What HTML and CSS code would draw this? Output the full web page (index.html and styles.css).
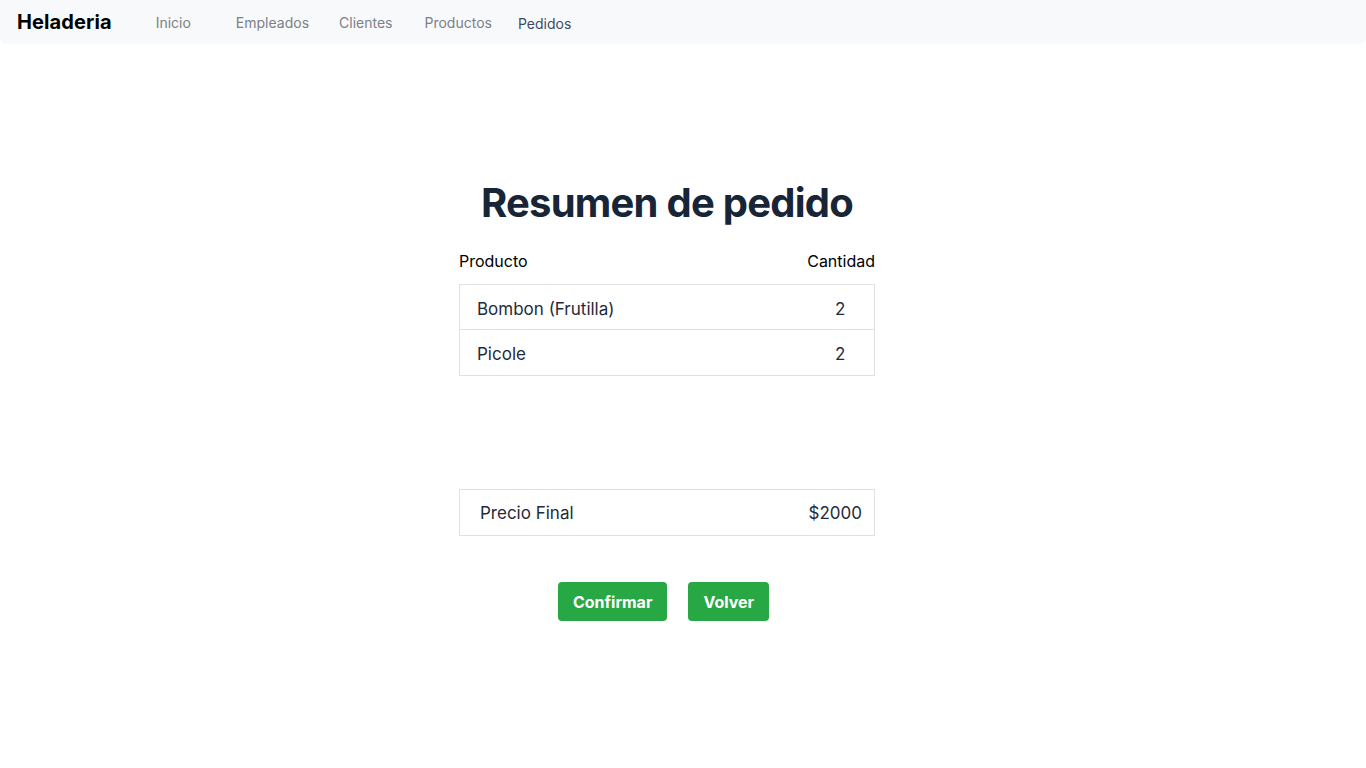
FILE: index.html
```html
<!DOCTYPE html>
<html lang="es">
<head>
<meta charset="utf-8">
<title>Heladeria</title>
<link rel="stylesheet" href="styles.css">
</head>
<body>
<nav class="navbar">
  <a class="brand" href="#">Heladeria</a>
  <ul class="nav-links">
    <li><a href="#">Inicio</a></li>
    <li><a href="#">Empleados</a></li>
    <li><a href="#">Clientes</a></li>
    <li><a href="#">Productos</a></li>
    <li><a class="active" href="#">Pedidos</a></li>
  </ul>
</nav>
<main class="content">
  <h1 class="title">Resumen de pedido</h1>
  <div class="summary">
    <div class="head">
      <span>Producto</span>
      <span>Cantidad</span>
    </div>
    <ul class="items">
      <li class="item"><span>Bombon (Frutilla)</span><span class="qty">2</span></li>
      <li class="item"><span>Picole</span><span class="qty">2</span></li>
    </ul>
    <div class="total">
      <span>Precio Final</span>
      <span>$2000</span>
    </div>
  </div>
  <div class="actions">
    <button class="btn">Confirmar</button>
    <button class="btn">Volver</button>
  </div>
</main>
</body>
</html>
```
FILE: styles.css
```css
* { box-sizing: border-box; }
body {
  margin: 0;
  font-family: Inter, "Liberation Sans", sans-serif;
  background: #fff;
  color: #1e293b;
}
.navbar {
  display: flex;
  align-items: center;
  height: 44px;
  background: #f8f9fa;
  padding: 0 17px;
  border-radius: 0 0 6px 6px;
}
.brand {
  font-size: 20px;
  font-weight: 700;
  color: #000;
  text-decoration: none;
  margin-right: 44px;
  letter-spacing: 0.1px;
}
.nav-links {
  display: flex;
  list-style: none;
  margin: 0;
  padding: 0;
  font-size: 14px;
}
.nav-links li a {
  color: #7c8087;
  text-decoration: none;
  margin-right: 45px;
}
.nav-links li:nth-child(2) a { margin-right: 30px; }
.nav-links li:nth-child(3) a { margin-right: 32px; }
.nav-links li:nth-child(4) a { margin-right: 26px; }
.nav-links li a.active {
  color: #3e4c5f;
  position: relative;
  top: 1px;
}
.content {
  display: flex;
  flex-direction: column;
  align-items: center;
  padding-top: 135px;
  padding-right: 32px;
}
.title {
  margin: 0;
  font-size: 40px;
  font-weight: 700;
  color: #172537;
  line-height: 48px;
  letter-spacing: -0.75px;
}
.summary {
  width: 416px;
  margin-top: 24px;
}
.head {
  display: flex;
  justify-content: space-between;
  font-size: 16px;
  color: #000;
  line-height: 20px;
  margin-bottom: 13px;
}
.items {
  list-style: none;
  margin: 0;
  padding: 0;
  border: 1px solid #dee2e6;
}
.item {
  display: flex;
  justify-content: space-between;
  align-items: center;
  height: 44px;
  padding: 3px 31px 0 17px;
  font-size: 17px;
  color: #1f2b3b;
}
.item + .item {
  border-top: 1px solid #dee2e6;
  height: 46px;
  padding-top: 2px;
}
.item .qty { width: 8px; text-align: center; }
.total {
  display: flex;
  justify-content: space-between;
  align-items: center;
  height: 47px;
  margin-top: 113px;
  border: 1px solid #dee2e6;
  padding: 0 12px 0 20px;
  font-size: 17px;
  color: #1f2b3b;
}
.actions {
  display: flex;
  gap: 21px;
  margin-top: 46px;
  margin-right: 7px;
}
.btn {
  font-family: inherit;
  background: #28a745;
  color: #fff;
  font-weight: 700;
  font-size: 16px;
  border: none;
  border-radius: 4px;
  height: 39px;
  padding: 0 15px;
}
```
